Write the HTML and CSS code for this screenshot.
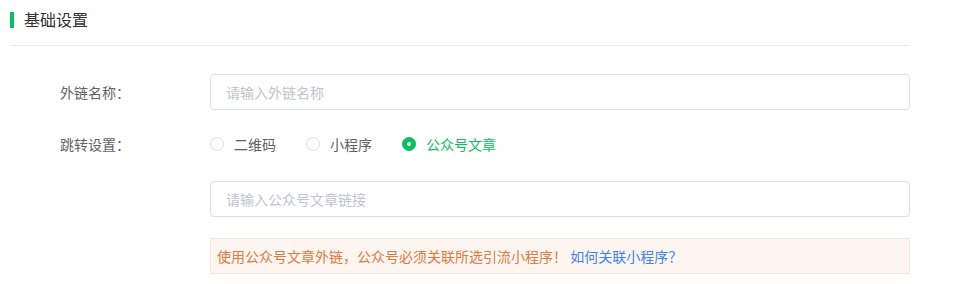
FILE: index.html
```html
<!DOCTYPE html>
<html lang="zh-CN">
<head>
<meta charset="utf-8">
<title>基础设置</title>
<link rel="stylesheet" href="styles.css">
</head>
<body>
<div class="page">
  <div class="section-head">
    <span class="bar"></span>
    <span class="section-title">基础设置</span>
  </div>
  <div class="form">
    <div class="row row-first">
      <div class="label">外链名称：</div>
      <div class="control">
        <div class="input"><span class="placeholder">请输入外链名称</span></div>
      </div>
    </div>
    <div class="row row-radio">
      <div class="label">跳转设置：</div>
      <div class="control radios">
        <label class="radio"><span class="circle"></span><span class="radio-text">二维码</span></label>
        <label class="radio"><span class="circle"></span><span class="radio-text">小程序</span></label>
        <label class="radio checked"><span class="circle"></span><span class="radio-text">公众号文章</span></label>
      </div>
    </div>
    <div class="row row-link">
      <div class="label"></div>
      <div class="control">
        <div class="input"><span class="placeholder">请输入公众号文章链接</span></div>
      </div>
    </div>
    <div class="row row-alert">
      <div class="label"></div>
      <div class="control">
        <div class="alert">使用公众号文章外链，公众号必须关联所选引流小程序！ <a class="alert-link">如何关联小程序？</a></div>
      </div>
    </div>
  </div>
</div>
</body>
</html>
```
FILE: styles.css
```css
html, body {
  margin: 0;
  padding: 0;
  background: #ffffff;
}
body {
  font-family: "Noto Sans CJK SC", "Noto Sans", sans-serif;
  font-size: 14px;
  color: #606266;
}
.page {
  width: 900px;
  margin: 0 10px;
}
.section-head {
  height: 45px;
  border-bottom: 1px solid #e8e8e8;
  display: flex;
  align-items: flex-start;
}
.bar {
  width: 4px;
  height: 16px;
  background: #07c160;
  margin-top: 12px;
}
.section-title {
  font-size: 16px;
  line-height: 20px;
  color: #303133;
  margin-left: 10px;
  margin-top: 9px;
}
.form {
  display: flex;
  flex-direction: column;
}
.row {
  display: flex;
  align-items: center;
  height: 36px;
}
.row-first { margin-top: 28px; }
.row-radio { margin-top: 16px; }
.row-link { margin-top: 19px; }
.row-alert { margin-top: 21px; }
.label {
  width: 200px;
  padding-left: 50px;
  box-sizing: border-box;
  flex: none;
  color: #606266;
  font-size: 14px;
}
.control {
  flex: 1;
}
.input {
  height: 36px;
  box-sizing: border-box;
  border: 1px solid #dcdfe6;
  border-radius: 4px;
  display: flex;
  align-items: center;
  padding-left: 15px;
}
.placeholder {
  color: #c0c4cc;
  font-size: 14px;
}
.radios {
  display: flex;
  align-items: center;
}
.radio {
  display: flex;
  align-items: center;
  margin-right: 30px;
  cursor: pointer;
}
.circle {
  width: 14px;
  height: 14px;
  box-sizing: border-box;
  border: 1px solid #dcdfe6;
  border-radius: 50%;
  position: relative;
  background: #fff;
}
.radio-text {
  padding-left: 10px;
  color: #606266;
  font-size: 14px;
}
.radio.checked .circle {
  border-color: #07c160;
  background: #07c160;
}
.radio.checked .circle::after {
  content: "";
  position: absolute;
  width: 4px;
  height: 4px;
  border-radius: 50%;
  background: #fff;
  left: 50%;
  top: 50%;
  transform: translate(-50%, -50%);
}
.radio.checked .radio-text {
  color: #07c160;
}
.alert {
  height: 36px;
  box-sizing: border-box;
  background: #fdf6f0;
  border: 1px solid #fae6d7;
  display: flex;
  align-items: center;
  padding-left: 6px;
  color: #dc7a40;
  font-size: 14px;
  white-space: pre;
}
.alert-link {
  color: #3d82f6;
  cursor: pointer;
}
```
